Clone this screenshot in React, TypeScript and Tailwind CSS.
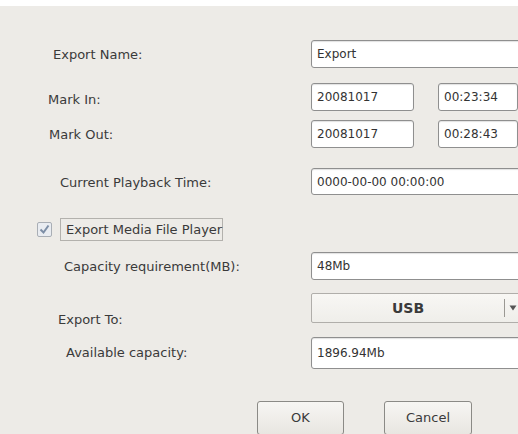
import React from 'react';

const font = { fontFamily: '"DejaVu Sans", "Liberation Sans", sans-serif' };

const Field: React.FC<{ value: string; className?: string }> = ({ value, className }) => (
  <div
    className={`h-full bg-white border border-[#8f8f8f] rounded-[3px] shadow-[inset_0_1px_1px_rgba(0,0,0,0.12)] pl-[5px] flex items-center text-[12px] text-[#333] whitespace-nowrap ${className ?? ''}`}
  >
    {value}
  </div>
);

interface RowProps {
  label: string;
  labelX: number;
  labelY: number;
  height: number;
  top: number;
  children: React.ReactNode;
}

const Row: React.FC<RowProps> = ({ label, labelX, labelY, height, top, children }) => (
  <div className="flex shrink-0" style={{ height, marginTop: top }}>
    <div className="w-[308px] shrink-0 leading-4" style={{ paddingLeft: labelX, paddingTop: labelY }}>
      <div className="text-[13px] leading-4 text-[#3a3a3a] whitespace-nowrap">{label}</div>
    </div>
    <div className="flex flex-1 h-full">{children}</div>
  </div>
);

export default function App() {
  return (
    <div className="w-[518px] h-[434px] overflow-hidden bg-white pt-[6px]" style={font}>
      <div className="w-full h-full bg-[#edebe7] flex flex-col pl-[3px]">
        {/* Export Name: input 40-68 */}
        <Row label="Export Name:" labelX={50} labelY={7} height={28} top={34}>
          <Field value="Export" className="w-[212px]" />
        </Row>
        {/* Mark In: 83-111 */}
        <Row label="Mark In:" labelX={45} labelY={9} height={28} top={15}>
          <Field value="20081017" className="w-[103px]" />
          <Field value="00:23:34" className="w-[80px] ml-[24px]" />
        </Row>
        {/* Mark Out: 120-148 */}
        <Row label="Mark Out:" labelX={46} labelY={7} height={28} top={9}>
          <Field value="20081017" className="w-[103px]" />
          <Field value="00:28:43" className="w-[80px] ml-[24px]" />
        </Row>
        {/* Current Playback Time: 168-195 */}
        <Row label="Current Playback Time:" labelX={57} labelY={7} height={27} top={20}>
          <Field value="0000-00-00 00:00:00" className="w-[212px]" />
        </Row>
        {/* Checkbox: 218-241 */}
        <div className="flex items-center h-[23px] mt-[23px] shrink-0">
          <div className="ml-[34px] w-[15px] h-[15px] border border-[#a9aeb5] bg-[#e9ecf1] rounded-[2px] flex items-center justify-center">
            <svg width="11" height="11" viewBox="0 0 11 11">
              <path d="M1.5 5.5 L4.5 8.5 L9.5 1.5" fill="none" stroke="#7d8ea6" strokeWidth="2" />
            </svg>
          </div>
          <div className="ml-[8px] h-[23px] w-[163px] border border-[#b3b1ad] flex items-center pl-[5px] text-[13px] text-[#3a3a3a] whitespace-nowrap">
            Export Media File Player
          </div>
        </div>
        {/* Capacity requirement: 252-280 */}
        <Row label="Capacity requirement(MB):" labelX={61} labelY={7} height={28} top={11}>
          <Field value="48Mb" className="w-[212px]" />
        </Row>
        {/* Export To: dropdown 293-323 */}
        <Row label="Export To:" labelX={55} labelY={19} height={30} top={13}>
          <div className="w-[212px] h-full border border-[#b0aeaa] rounded-[2px] bg-gradient-to-b from-[#f8f7f4] to-[#efeeea] flex items-center">
            <div className="w-[192px] text-center text-[14px] font-bold text-[#3a3a3a]">USB</div>
            <div className="w-px h-[18px] bg-[#9a9893]" />
            <svg className="ml-[4px]" width="8" height="6" viewBox="0 0 8 6">
              <path d="M0.5 0.5 L7.5 0.5 L4 5.5 Z" fill="#555" />
            </svg>
          </div>
        </Row>
        {/* Available capacity: 337-369 */}
        <Row label="Available capacity:" labelX={63} labelY={8} height={32} top={14}>
          <Field value="1896.94Mb" className="w-[212px]" />
        </Row>
        {/* Buttons: 401-434 */}
        <div className="flex mt-[32px] h-[34px] shrink-0">
          <button className="ml-[254px] w-[87px] h-full border border-[#8b8a86] rounded-[3px] bg-gradient-to-b from-[#f7f6f3] to-[#e8e6e1] text-[13px] text-[#3a3a3a]">
            OK
          </button>
          <button className="ml-[40px] w-[88px] h-full border border-[#8b8a86] rounded-[3px] bg-gradient-to-b from-[#f7f6f3] to-[#e8e6e1] text-[13px] text-[#3a3a3a]">
            Cancel
          </button>
        </div>
      </div>
    </div>
  );
}
